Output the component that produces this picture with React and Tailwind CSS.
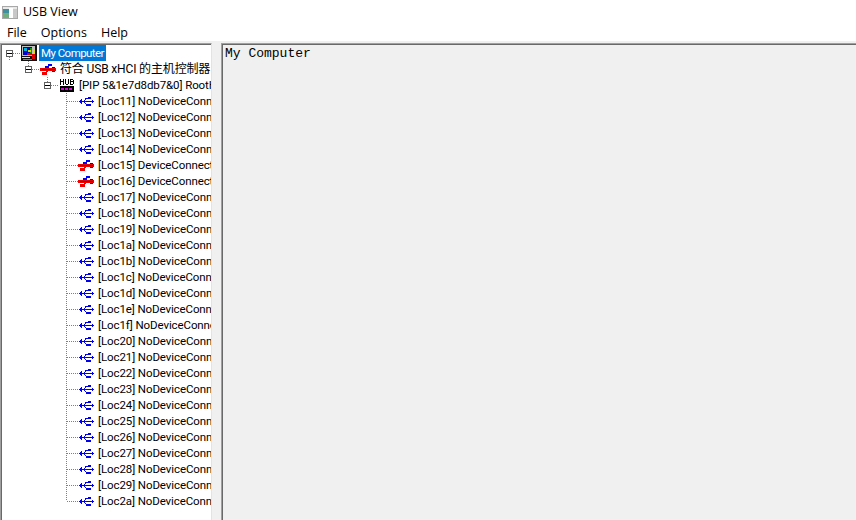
import React from "react";

const Px = ({ cells }) =>
  cells.map(([x, y, w, h, c], i) => <rect key={i} x={x} y={y} width={w} height={h} fill={c} />);

const Icon = ({ cells }) => (
  <svg width="16" height="16" viewBox="0 0 16 16" shapeRendering="crispEdges" className="shrink-0">
    <Px cells={cells} />
  </svg>
);

const B = "#0000f0";
const R = "#f00000";
const usb = [
  [1, 8, 15, 1, B],
  [2, 7, 1, 3, B],
  [3, 6, 1, 5, B],
  [6, 7, 1, 1, B],
  [7, 5, 1, 2, B],
  [8, 5, 2, 1, B],
  [10, 4, 3, 2, B],
  [6, 9, 1, 1, B],
  [7, 10, 1, 1, B],
  [8, 11, 5, 2, B],
  [14, 7, 1, 3, B],
];
const usbRed = [
  [0, 7, 16, 3, R],
  [2, 8, 13, 1, B],
  [5, 5, 4, 2, B],
  [8, 3, 4, 2, B],
  [12, 6, 3, 1, B],
  [12, 10, 3, 1, B],
  [2, 11, 5, 3, R],
  [6, 10, 2, 1, R],
];
const hub = [
  [1, 2, 1, 6, "#000"], [4, 2, 1, 6, "#000"], [2, 4, 2, 1, "#000"],
  [6, 2, 1, 5, "#000"], [9, 2, 1, 5, "#000"], [7, 7, 2, 1, "#000"],
  [11, 2, 1, 6, "#000"], [14, 3, 1, 4, "#000"], [12, 2, 2, 1, "#000"], [12, 4, 2, 1, "#000"], [12, 7, 2, 1, "#000"],
  [1, 9, 14, 6, "#000"],
  [2, 11, 3, 2, "#e000e0"], [6, 11, 3, 2, "#e000e0"], [10, 11, 3, 2, "#e000e0"],
];
const computer = [
  [0, 0, 16, 16, "#101010"],
  [1, 1, 13, 10, "#c0c0c0"],
  [2, 2, 9, 8, "#0000d0"],
  [3, 3, 3, 3, "#00b0e0"],
  [9, 3, 2, 7, "#00a000"],
  [7, 5, 3, 2, "#e0e000"],
  [6, 8, 5, 2, "#e00000"],
  [11, 9, 3, 5, "#e00000"],
  [12, 5, 2, 4, "#e0e000"],
  [1, 12, 8, 1, "#e0e0e0"],
  [2, 14, 9, 1, "#808080"],
];

const Connector = ({ box, up, down }) => (
  <svg width="19" height="16" viewBox="0 0 19 16" shapeRendering="crispEdges" className="shrink-0">
    {up && <line x1="7.5" y1="0" x2="7.5" y2={box ? 5 : 8} stroke="#808080" strokeDasharray="1 1" />}
    {down && <line x1="7.5" y1="8" x2="7.5" y2="16" stroke="#808080" strokeDasharray="1 1" />}
    <line x1={box ? 11 : 8} y1="8.5" x2="19" y2="8.5" stroke="#808080" strokeDasharray="1 1" />
    {box && (
      <g>
        <rect x="4.5" y="5.5" width="6" height="6" fill="#fff" stroke="#606060" />
        <rect x="5" y="8" width="5" height="1" fill="#000" />
      </g>
    )}
  </svg>
);

const locs = ["11","12","13","14","15","16","17","18","19","1a","1b","1c","1d","1e","1f","20","21","22","23","24","25","26","27","28","29","2a"];

const Row = ({ level, icon, box, up, down, selected, children }) => (
  <div className="flex h-4 items-center whitespace-nowrap" style={{ paddingLeft: level * 19 }}>
    <Connector box={box} up={up} down={down} />
    <Icon cells={icon} />
    <span className={selected ? "ml-[2px] bg-[#0078d7] px-[2px] tracking-[-0.55px] text-white leading-4" : "ml-[4px] text-black leading-4"}>
      {children}
    </span>
  </div>
);

export default function App() {
  return (
    <div className="flex h-[520px] w-[856px] flex-col overflow-hidden bg-white font-['Open_Sans','Noto_Sans_CJK_SC',sans-serif] text-black">
      <div className="flex h-[23px] items-center pt-[2px]">
        <svg width="16" height="13" viewBox="0 0 16 13" shapeRendering="crispEdges" className="ml-[2px]">
          <rect x="0" y="0" width="16" height="13" fill="#a8a8a8" />
          <rect x="1" y="1" width="14" height="11" fill="#e8e8e8" />
          <rect x="1" y="3" width="6" height="4" fill="#3f8f9f" />
          <rect x="1" y="7" width="6" height="5" fill="#6faf7f" />
          <rect x="7" y="2" width="4" height="10" fill="#ffffff" />
          <rect x="11" y="3" width="4" height="9" fill="#c8c8c8" />
        </svg>
        <span className="ml-[5px] text-[12.5px] leading-none">USB View</span>
      </div>
      <div className="flex h-[18px] items-center gap-[14px] pl-[7px] pt-[2px] text-[12.5px] leading-none">
        <span>File</span>
        <span>Options</span>
        <span>Help</span>
      </div>
      <div className="flex min-h-0 flex-1 bg-[#f0f0f0] pt-[2px]">
        <div className="h-full w-[212px] shrink-0 overflow-hidden border-t border-l border-r border-t-[#a0a0a0] border-l-[#a0a0a0] border-r-[#e3e3e3]">
          <div className="h-full overflow-hidden border-t border-l border-t-[#696969] border-l-[#696969] bg-white font-['Roboto','Noto_Sans_CJK_SC',sans-serif] text-[11.5px] tracking-[-0.1px]">
            <Row level={0} icon={computer} box down selected>My Computer</Row>
            <Row level={1} icon={usbRed} box up>
              <span className="text-[12px] tracking-[-0.15px]">符合 USB xHCI 的主机控制器</span>
            </Row>
            <Row level={2} icon={hub} box up>[PIP 5&amp;1e7d8db7&amp;0] RootHub</Row>
            {locs.map((l, i) => {
              const connected = l === "15" || l === "16";
              return (
                <Row key={l} level={3} icon={connected ? usbRed : usb} up down={i < locs.length - 1}>
                  [Loc{l}] {connected ? "DeviceConnected" : "NoDeviceConnected"}
                </Row>
              );
            })}
          </div>
        </div>
        <div className="ml-[9px] min-w-0 flex-1 border-t border-l border-t-[#a0a0a0] border-l-[#a0a0a0]">
          <div className="h-full border-t border-l border-t-[#696969] border-l-[#696969] pl-[2px] pt-[1px] font-['Liberation_Mono',monospace] text-[13px] leading-4">
            My Computer
          </div>
        </div>
      </div>
    </div>
  );
}
